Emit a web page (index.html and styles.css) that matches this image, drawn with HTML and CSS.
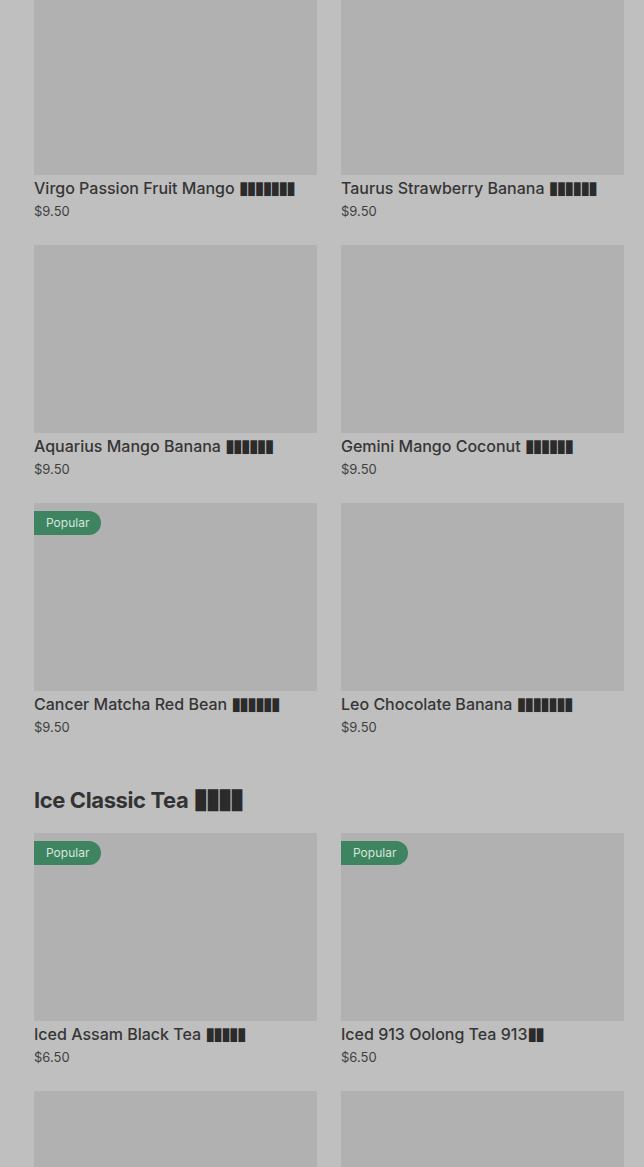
FILE: index.html
```html
<!DOCTYPE html>
<html lang="en">
<head>
    <meta charset="UTF-8">
    <meta name="viewport" content="width=device-width, initial-scale=1.0">
    <title>Menu</title>
    <link rel="stylesheet" href="styles.css">
</head>
<body>
    <main class="menu">
        <section class="category">
            <div class="grid">
                <div class="item">
                    <div class="photo"></div>
                    <h3 class="name">Virgo Passion Fruit Mango <span class="zh">▮▮▮▮▮▮▮</span></h3>
                    <p class="price">$9.50</p>
                </div>
                <div class="item">
                    <div class="photo"></div>
                    <h3 class="name">Taurus Strawberry Banana <span class="zh">▮▮▮▮▮▮</span></h3>
                    <p class="price">$9.50</p>
                </div>
                <div class="item">
                    <div class="photo"></div>
                    <h3 class="name">Aquarius Mango Banana <span class="zh">▮▮▮▮▮▮</span></h3>
                    <p class="price">$9.50</p>
                </div>
                <div class="item">
                    <div class="photo"></div>
                    <h3 class="name">Gemini Mango Coconut <span class="zh">▮▮▮▮▮▮</span></h3>
                    <p class="price">$9.50</p>
                </div>
                <div class="item">
                    <div class="photo"><span class="badge">Popular</span></div>
                    <h3 class="name">Cancer Matcha Red Bean <span class="zh">▮▮▮▮▮▮</span></h3>
                    <p class="price">$9.50</p>
                </div>
                <div class="item">
                    <div class="photo"></div>
                    <h3 class="name">Leo Chocolate Banana <span class="zh">▮▮▮▮▮▮▮</span></h3>
                    <p class="price">$9.50</p>
                </div>
            </div>
        </section>

        <section class="category">
            <h2 class="category-title">Ice Classic Tea <span class="zh">▮▮▮▮</span></h2>
            <div class="grid">
                <div class="item">
                    <div class="photo"><span class="badge">Popular</span></div>
                    <h3 class="name">Iced Assam Black Tea <span class="zh">▮▮▮▮▮</span></h3>
                    <p class="price">$6.50</p>
                </div>
                <div class="item">
                    <div class="photo"><span class="badge">Popular</span></div>
                    <h3 class="name">Iced 913 Oolong Tea 913<span class="zh">▮▮</span></h3>
                    <p class="price">$6.50</p>
                </div>
                <div class="item">
                    <div class="photo"></div>
                </div>
                <div class="item">
                    <div class="photo"></div>
                </div>
            </div>
        </section>
    </main>
</body>
</html>
```

FILE: styles.css
```css
body {
    font-family: 'Inter', 'Roboto', sans-serif;
    margin: 0;
    padding: 0;
    background-color: #bfbfbf;
    color: #333;
    overflow: hidden;
}

.menu {
    margin-top: -13px;
    padding: 0 20px 0 34px;
}

.category-title {
    margin: 48px 0 18px;
    font-size: 22px;
    line-height: 30px;
    font-weight: 700;
    letter-spacing: -0.4px;
    color: #333;
}

.category-title .zh {
    font-size: 29px;
    letter-spacing: -3.9px;
}

.grid {
    display: grid;
    grid-template-columns: 1fr 1fr;
    column-gap: 24px;
    row-gap: 24px;
}

.photo {
    position: relative;
    height: 188px;
    background-color: #b1b1b1;
}

.badge {
    position: absolute;
    top: 8px;
    left: 0;
    height: 24px;
    padding: 0 12px;
    line-height: 24px;
    font-size: 12px;
    color: #d6e6dc;
    background-color: #3e8461;
    border-radius: 0 12px 12px 0;
}

.name {
    margin: 2px 0 0;
    font-size: 16px;
    line-height: 22px;
    font-weight: 500;
    color: #363636;
}

.price {
    margin: 2px 0 0;
    font-size: 13px;
    line-height: 20px;
    color: #3f3f3f;
}

/* chinese names show as blank boxes in the capture */
.zh {
    font-family: 'DejaVu Sans', sans-serif;
    font-size: 18px;
    line-height: 0;
    letter-spacing: -2px;
    color: #2b2b2b;
}
```
